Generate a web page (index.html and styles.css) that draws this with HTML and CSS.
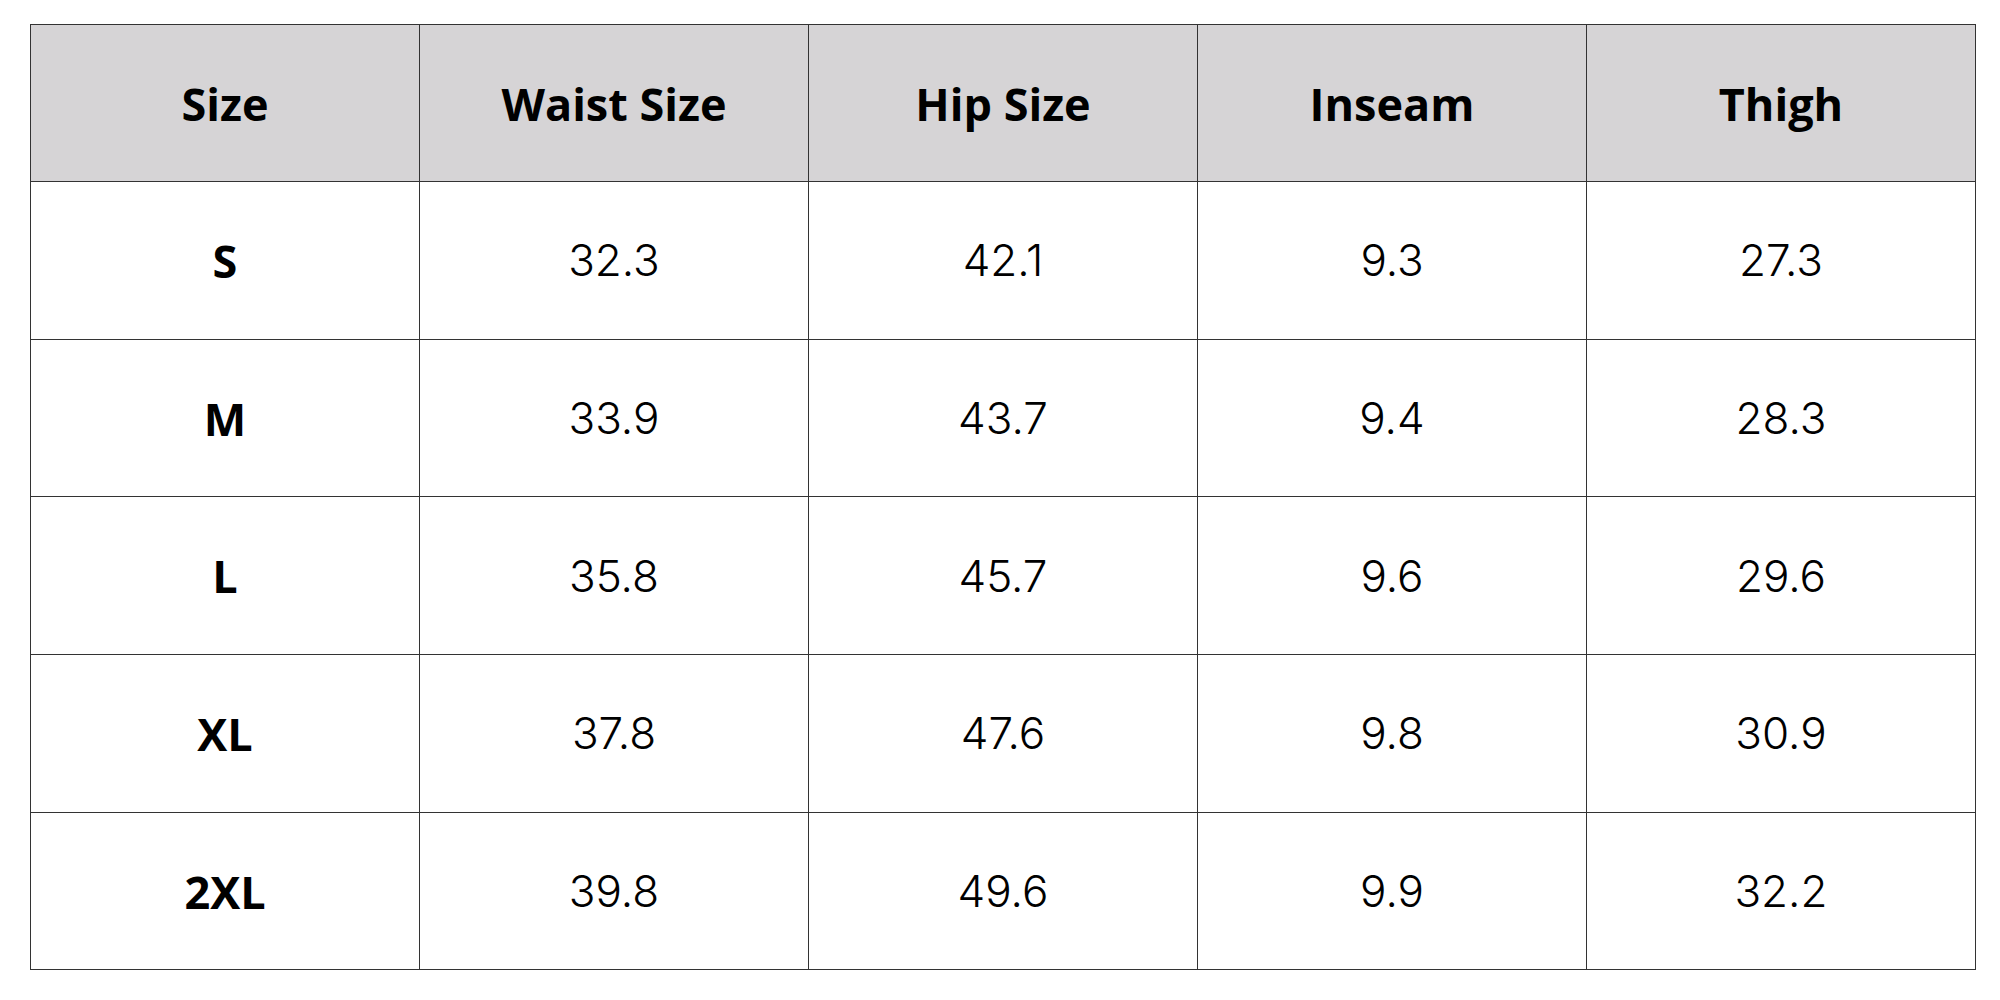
FILE: index.html
```html
<!DOCTYPE html>
<html lang="en">
<head>
<meta charset="utf-8">
<title>Size Chart</title>
<link rel="stylesheet" href="styles.css">
</head>
<body>
<table class="chart">
  <thead>
    <tr><th>Size</th><th>Waist Size</th><th>Hip Size</th><th>Inseam</th><th>Thigh</th></tr>
  </thead>
  <tbody>
    <tr><th>S</th><td>32.3</td><td>42.1</td><td>9.3</td><td>27.3</td></tr>
    <tr><th>M</th><td>33.9</td><td>43.7</td><td>9.4</td><td>28.3</td></tr>
    <tr><th>L</th><td>35.8</td><td>45.7</td><td>9.6</td><td>29.6</td></tr>
    <tr><th>XL</th><td>37.8</td><td>47.6</td><td>9.8</td><td>30.9</td></tr>
    <tr><th>2XL</th><td>39.8</td><td>49.6</td><td>9.9</td><td>32.2</td></tr>
  </tbody>
</table>
</body>
</html>
```
FILE: styles.css
```css
html, body {
  margin: 0;
  padding: 0;
  background: #ffffff;
}
body {
  padding: 24px 0 0 30px;
}
.chart {
  border-collapse: collapse;
  table-layout: fixed;
  width: 1945px;
  border: 1.5px solid #6a6a6a;
  color: #000;
}
.chart th,
.chart td {
  width: 389px;
  height: 157.7px;
  padding: 0;
  text-align: center;
  vertical-align: middle;
  border: 1px solid #333;
  box-sizing: border-box;
}
.chart thead th {
  height: 157px;
  background: #d6d4d6;
  font-family: "Open Sans", sans-serif;
  font-weight: 700;
  font-size: 45px;
}
.chart tbody th {
  font-family: "Open Sans", sans-serif;
  font-weight: 700;
  font-size: 45px;
}
.chart td {
  font-family: Inter, sans-serif;
  font-weight: 350;
  font-size: 44px;
}
```
